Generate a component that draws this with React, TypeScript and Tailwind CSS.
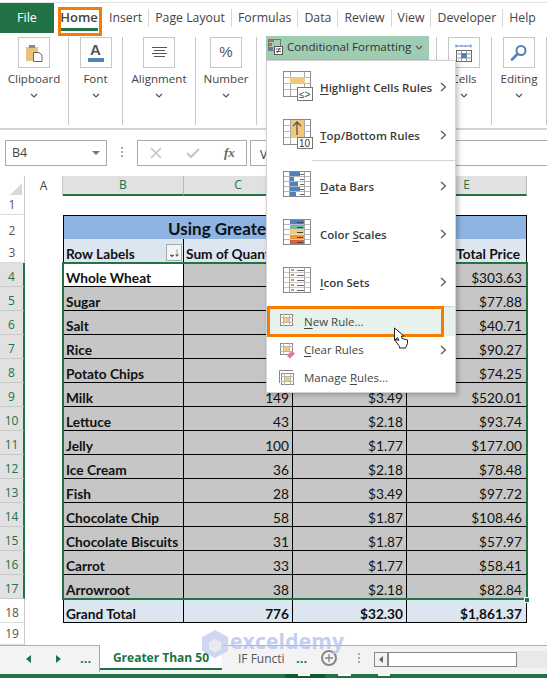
import React from "react";

const ui = "font-['Open_Sans',sans-serif]";
const cal = "font-['Lato',sans-serif]";

function Chev({ className = "" }: { className?: string }) {
  return (
    <svg width="8" height="5" viewBox="0 0 8 5" className={className}>
      <polyline points="1,1 4,4 7,1" fill="none" stroke="#555" strokeWidth="1.2" />
    </svg>
  );
}

function ChevR() {
  return (
    <svg width="7" height="10" viewBox="0 0 7 10">
      <polyline points="1,1 5.5,5 1,9" fill="none" stroke="#555" strokeWidth="1.2" />
    </svg>
  );
}

function Sep() {
  return <div className="w-px h-[88px] bg-[#c8c8c8] self-start mt-[4px] shrink-0" />;
}

function Group({ w, label, children }: { w: string; label: string; children: React.ReactNode }) {
  return (
    <div className={`${w} shrink-0 flex flex-col items-center pt-[4px]`}>
      <div className="w-[32px] h-[31px] border border-[#c6c6c6] bg-white flex items-center justify-center">{children}</div>
      <div className={`${ui} text-[11.6px] leading-[16px] mt-[3px] text-[#444] whitespace-nowrap`}>{label}</div>
      <Chev className="mt-[6px]" />
    </div>
  );
}

function Grid28({ children, over }: { children?: React.ReactNode; over?: React.ReactNode }) {
  const v = [7, 21];
  const h = [6.5, 12.5, 18.5];
  return (
    <svg width="31" height="30" viewBox="0 0 31 30" className="shrink-0">
      <rect x="0.5" y="0.5" width="27" height="25" fill="#fff" stroke="#8a8a8a" />
      {children}
      {v.map((p) => (
        <line key={p} x1={p + 0.5} y1="0" x2={p + 0.5} y2="26" stroke="#a8a8a8" />
      ))}
      {h.map((p) => (
        <line key={p} x1="0" y1={p} x2="28" y2={p} stroke="#b8b8b8" />
      ))}
      <rect x="0.5" y="0.5" width="27" height="25" fill="none" stroke="#8a8a8a" />
      {over}
    </svg>
  );
}

function IcoHighlight() {
  return (
    <Grid28
      over={
        <>
          <rect x="7" y="6" width="15" height="7" fill="#f0c97d" />
          <rect x="14.5" y="16.5" width="15" height="13" fill="#fff" stroke="#777" />
          <text x="16" y="27" fontSize="10" fill="#444" fontFamily="Liberation Sans">≤&gt;</text>
        </>
      }
    />
  );
}

function IcoTop() {
  return (
    <Grid28
      over={
        <>
          <rect x="8" y="1" width="13" height="18" fill="#f0c97d" />
          <path d="M14 16V3M10 7l4-4 4 4" fill="none" stroke="#555" strokeWidth="1.3" />
          <rect x="14.5" y="18.5" width="15" height="11" fill="#fff" stroke="#777" />
          <text x="16" y="28" fontSize="10" fill="#333" fontFamily="Liberation Sans">10</text>
        </>
      }
    />
  );
}

function IcoBars() {
  const w = [10, 4, 8, 10, 6];
  return (
    <svg width="31" height="30" viewBox="0 0 31 30" className="shrink-0">
      <rect x="0.5" y="0.5" width="27" height="25" fill="#fff" stroke="#8a8a8a" />
      {w.map((b, i) => (
        <g key={i}>
          <rect x="7" y={1 + i * 5} width={b} height="4" fill="#4f81bd" />
          <rect x="17" y={3 + i * 5} width="4" height="1" fill="#666" />
          <line x1="0" y1={5.5 + i * 5} x2="28" y2={5.5 + i * 5} stroke="#b8b8b8" />
        </g>
      ))}
      <line x1="6.5" y1="0" x2="6.5" y2="26" stroke="#a8a8a8" />
      <line x1="21.5" y1="0" x2="21.5" y2="26" stroke="#a8a8a8" />
      <rect x="0.5" y="0.5" width="27" height="25" fill="none" stroke="#8a8a8a" />
    </svg>
  );
}

function IcoScales() {
  const c = ["#4f81bd", "#7fb59c", "#f0c97d", "#ec9440", "#d9603b"];
  return (
    <svg width="31" height="30" viewBox="0 0 31 30" className="shrink-0">
      <rect x="0.5" y="0.5" width="27" height="25" fill="#fff" stroke="#8a8a8a" />
      {c.map((b, i) => (
        <g key={i}>
          <rect x="7" y={1 + i * 5} width="14" height="4.5" fill={b} />
          <rect x="14" y={3 + i * 5} width="6" height="1" fill="#444" />
          <line x1="0" y1={5.5 + i * 5} x2="7" y2={5.5 + i * 5} stroke="#b8b8b8" />
          <line x1="21" y1={5.5 + i * 5} x2="28" y2={5.5 + i * 5} stroke="#b8b8b8" />
        </g>
      ))}
      <line x1="21.5" y1="0" x2="21.5" y2="26" stroke="#a8a8a8" />
      <rect x="0.5" y="0.5" width="27" height="25" fill="none" stroke="#8a8a8a" />
    </svg>
  );
}

function IcoSets() {
  const c = ["#7fb59c", "#ec8a3a", "#7fb59c", "#ec8a3a", "#7fb59c"];
  return (
    <svg width="31" height="30" viewBox="0 0 31 30" className="shrink-0">
      <rect x="0.5" y="0.5" width="27" height="25" fill="#fff" stroke="#8a8a8a" />
      {c.map((b, i) => (
        <g key={i}>
          <rect x="8" y={2 + i * 5} width="3" height="2" fill={b} />
          <rect x="14" y={3 + i * 5} width="7" height="1" fill="#666" />
          <line x1="0" y1={5.5 + i * 5} x2="28" y2={5.5 + i * 5} stroke="#c8c8c8" />
        </g>
      ))}
      <line x1="6.5" y1="0" x2="6.5" y2="26" stroke="#a8a8a8" />
      <line x1="21.5" y1="0" x2="21.5" y2="26" stroke="#a8a8a8" />
      <rect x="0.5" y="0.5" width="27" height="25" fill="none" stroke="#8a8a8a" />
    </svg>
  );
}

function SmallGrid({ eraser, stack }: { eraser?: boolean; stack?: boolean }) {
  const dx = stack ? 2 : 1;
  const dy = stack ? 3 : 1;
  return (
    <svg width="17" height="17" viewBox="0 0 17 17" className="shrink-0">
      {stack && <path d="M0.5 13V0.5H14" fill="none" stroke="#888" />}
      <rect x={dx + 0.5} y={dy + 0.5} width="12" height="11" fill="#fff" stroke="#8a8a8a" />
      <path d={`M${dx + 3.5} ${dy}V${dy + 12}M${dx + 9.5} ${dy}V${dy + 12}M${dx} ${dy + 3.5}H${dx + 13}M${dx} ${dy + 8.5}H${dx + 13}`} stroke="#b8b8b8" />
      <rect x={dx + 4} y={dy + 4} width="5" height="4" fill="#f0c97d" />
      {eraser && <path d="M8 14l5-5 3 2.5-5 5z" fill="#e8788a" />}
    </svg>
  );
}

function MenuBig({ icon, children, shift }: { icon: React.ReactNode; children: React.ReactNode; shift?: boolean }) {
  return (
    <div className="h-[48px] flex items-center pl-[16px] pr-[8px] shrink-0">
      <div className={shift ? "-mt-[2px]" : ""}>{icon}</div>
      <div className={`${ui} ml-[6px] text-[11.5px] font-semibold text-[#3c3c3c] flex-1 whitespace-nowrap mt-[1px]`}>{children}</div>
      <ChevR />
    </div>
  );
}

function MenuSmall({ icon, children, hi, arrow, h }: { icon: React.ReactNode; children: React.ReactNode; hi?: boolean; arrow?: boolean; h: string }) {
  return (
    <div className={`${h} flex items-center pl-[12px] pr-[8px] shrink-0 ${hi ? "bg-[#e8f2ec]" : ""}`}>
      {icon}
      <div className={`${ui} ml-[8px] text-[11.5px] text-[#444] flex-1 whitespace-nowrap`}>{children}</div>
      {arrow && <ChevR />}
    </div>
  );
}

const U = ({ children }: { children: React.ReactNode }) => <span className="underline underline-offset-2">{children}</span>;

function Menu() {
  return (
    <div className="absolute left-[266px] top-[60px] w-[190px] h-[333px] bg-white border border-[#d4d4d4] shadow-[2px_2px_5px_rgba(0,0,0,0.25)] flex flex-col pt-[2px] z-20">
      <MenuBig icon={<IcoHighlight />} shift><U>H</U>ighlight Cells Rules</MenuBig>
      <MenuBig icon={<IcoTop />} shift><U>T</U>op/Bottom Rules</MenuBig>
      <div className="ml-[45px] h-px bg-[#d4d4d4] my-[1px] shrink-0" />
      <MenuBig icon={<IcoBars />}><U>D</U>ata Bars</MenuBig>
      <MenuBig icon={<IcoScales />}>Color <U>S</U>cales</MenuBig>
      <MenuBig icon={<IcoSets />}><U>I</U>con Sets</MenuBig>
      <div className="ml-[2px] h-px bg-[#d4d4d4] shrink-0" />
      <MenuSmall h="h-[29px]" icon={<SmallGrid />} hi><U>N</U>ew Rule...</MenuSmall>
      <MenuSmall h="h-[28px]" icon={<SmallGrid eraser />} arrow><U>C</U>lear Rules</MenuSmall>
      <MenuSmall h="h-[28px]" icon={<SmallGrid stack />}>Manage <U>R</U>ules...</MenuSmall>
      <div className="absolute left-[0px] top-[245px] w-[177px] h-[31px] border-[3px] border-[#f57c00]" />
    </div>
  );
}

function Cursor() {
  return (
    <svg width="16" height="22" viewBox="0 0 16 22" className="absolute left-[393px] top-[327px] z-30">
      <path d="M1.5 1V13.5L4.5 10.5L5.8 13.5L3 12.5L2.5 14L6.5 19.5V21H12.5L14.5 16.5V13L11 12L9 11.5L8.5 9L11 9Z" fill="#fff" stroke="#222" strokeWidth="1" strokeLinejoin="round" />
    </svg>
  );
}

const TAB = `${ui} text-[12.3px] text-[#444] px-[6px] whitespace-nowrap`;

function TabBar() {
  const items = ["Insert", "Page Layout", "Formulas", "Data", "Review", "View", "Developer", "Help"];
  return (
    <div className="h-[31px] mt-[2px] border-t border-[#e2e2e2] flex items-stretch bg-white relative shrink-0">
      <div className={`${ui} w-[54px] bg-[#217346] text-white text-[12.5px] flex items-center justify-center shrink-0`}>File</div>
      <div className="relative w-[50px] shrink-0 flex items-center justify-center">
        <span className={`${ui} text-[13px] text-[#444] font-semibold`}>Home</span>
        <div className="absolute left-[6px] top-[25px] w-[38px] h-[3px] bg-[#217346]" />
        <div className="absolute left-[4px] top-[4px] w-[44px] h-[29px] border-[3px] border-[#f57c00]" />
      </div>
      <div className="flex items-center -ml-[1px]">
        {items.map((t, i) => (
          <React.Fragment key={t}>
            {i > 0 && <div className="w-px h-[18px] bg-[#d6d6d6] shrink-0" />}
            <div className={TAB}>{t}</div>
          </React.Fragment>
        ))}
      </div>
    </div>
  );
}

function Ribbon() {
  return (
    <div className="h-[97px] border-b-2 border-[#d4d4d4] flex bg-white shrink-0 overflow-hidden">
      <Group w="w-[68px]" label="Clipboard">
        <svg width="18" height="18" viewBox="0 0 18 18">
          <rect x="1" y="3" width="12" height="14" fill="#e8c17f" />
          <rect x="4" y="1" width="6" height="3" fill="#888" />
          <path d="M8.5 8.5H14L17 11V17.5H8.5Z" fill="#fff" stroke="#666" />
        </svg>
      </Group>
      <Sep />
      <Group w="w-[53px]" label="Font">
        <div className="flex flex-col items-center">
          <span className="font-['Liberation_Sans',sans-serif] font-bold text-[15px] leading-[14px] text-[#555]">A</span>
          <div className="w-[16px] h-[4px] bg-[#4f81bd] mt-[1px]" />
        </div>
      </Group>
      <Sep />
      <Group w="w-[72px]" label="Alignment">
        <svg width="15" height="12" viewBox="0 0 15 12">
          <path d="M0 .5H15M2 3.5H13M0 6.5H15M2 9.5H13" stroke="#555" />
        </svg>
      </Group>
      <Sep />
      <Group w="w-[60px]" label="Number">
        <span className="font-['Liberation_Sans',sans-serif] text-[15px] text-[#555]">%</span>
      </Group>
      <Sep />
      <div className="w-[179px] shrink-0 pt-[3px] pl-[9px]">
        <div className={`${ui} w-[163px] h-[24px] pb-[2px] bg-[#9fcdb3] flex items-center pl-[2px] text-[11.6px] text-[#333]`}>
          <svg width="15" height="16" viewBox="0 0 15 16" className="shrink-0 mr-[4px]">
            <rect x="0" y="0" width="6" height="3" fill="#d9603b" />
            <rect x="0" y="4" width="4" height="3" fill="#d9603b" />
            <rect x="0" y="8" width="5" height="3" fill="#4f81bd" />
            <rect x="0.5" y="0.5" width="12" height="11" fill="none" stroke="#777" />
            <rect x="6.5" y="7.5" width="8" height="8" fill="#fff" stroke="#555" />
            <path d="M8 10H13M8 12.5H13M9 14L12 9" stroke="#333" strokeWidth="0.8" />
          </svg>
          <span className="whitespace-nowrap">Conditional Formatting</span>
          <Chev className="ml-[4px]" />
        </div>
      </div>
      <Sep />
      <Group w="w-[54px]" label="Cells">
        <svg width="18" height="18" viewBox="0 0 18 18">
          <path d="M1 2H16M1 .5V3.5M16 .5V3.5M6 2H7M10 2H11" stroke="#4f81bd" />
          <rect x="1.5" y="6.5" width="15" height="11" fill="#fff" stroke="#666" />
          <path d="M6.5 6V18M11.5 6V18M1 10H17M1 14H17" stroke="#999" />
          <rect x="6" y="9" width="6" height="5" fill="#4f81bd" />
        </svg>
      </Group>
      <Sep />
      <Group w="w-[54px]" label="Editing">
        <svg width="18" height="18" viewBox="0 0 18 18">
          <circle cx="11" cy="6.5" r="4.5" fill="none" stroke="#4f81bd" strokeWidth="2" />
          <path d="M7.5 10L2 15.5" stroke="#4f81bd" strokeWidth="2.6" strokeLinecap="round" />
        </svg>
      </Group>
      <Sep />
    </div>
  );
}

function FormulaBar() {
  return (
    <div className="h-[46px] pt-[10px] pl-[5px] flex items-start bg-white shrink-0">
      <div className={`${ui} w-[102px] h-[26px] border border-[#ababab] flex items-center justify-between pl-[6px] pr-[6px] text-[12.5px] text-[#444]`}>
        B4
        <svg width="8" height="4" viewBox="0 0 8 4"><path d="M0 0H8L4 4Z" fill="#777" /></svg>
      </div>
      <div className="w-[30px] flex flex-col items-center gap-[2px] pt-[7px]">
        <div className="w-[2px] h-[2px] bg-[#aaa]" />
        <div className="w-[2px] h-[2px] bg-[#aaa]" />
        <div className="w-[2px] h-[2px] bg-[#aaa]" />
      </div>
      <div className="w-[110px] h-[26px] border border-[#ababab] flex items-center pl-[12px] shrink-0">
        <svg width="12" height="12" viewBox="0 0 12 12"><path d="M1 1L11 11M11 1L1 11" stroke="#c4c4c4" strokeWidth="1.6" /></svg>
        <svg width="14" height="12" viewBox="0 0 14 12" className="ml-[24px]"><path d="M1 6L5 10L13 2" fill="none" stroke="#c4c4c4" strokeWidth="2" /></svg>
        <span className="font-['Liberation_Serif',serif] italic font-bold text-[13px] text-[#666] ml-[24px]">fx</span>
      </div>
      <div className="flex-1 h-[26px] ml-[3px] border border-[#ababab] border-r-0 pl-[9px]">
        <span className={`${ui} text-[12px] text-[#333]`}>V</span>
      </div>
    </div>
  );
}

const COLS = "grid grid-cols-[25px_38px_121px_109px_114px_120px_20px]";

function ColHeader() {
  return (
    <div className={`${COLS} h-[19px] shrink-0 ${ui} text-[12px] text-[#217346]`}>
      <div className="relative bg-white border-r border-[#c8c8c8]">
        <svg width="12" height="12" viewBox="0 0 12 12" className="absolute right-[2px] bottom-[1px]"><path d="M12 0V12H0Z" fill="#d9d9d9" /></svg>
      </div>
      <div className="bg-white flex items-center justify-center text-[#444] border-r border-[#c8c8c8]">A</div>
      {["B", "C", "D", "E"].map((c) => (
        <div key={c} className="bg-[#e1e1e1] border-r border-[#b8b8b8] border-b-2 border-b-[#217346] flex items-center justify-center">{c}</div>
      ))}
      <div className="bg-white" />
    </div>
  );
}

function RowHead({ n, sel, low }: { n: number; sel?: boolean; low?: boolean }) {
  return (
    <div className={`${ui} text-[12px] flex items-center justify-center border-b ${low ? "pt-[5px]" : ""} ${sel ? "bg-[#e1e1e1] text-[#217346] border-r-2 border-r-[#217346] border-b-[#c8c8c8]" : "bg-white text-[#555] border-r border-r-[#c8c8c8] border-b-[#dcdcdc]"}`}>
      {n}
    </div>
  );
}

const data: [string, string, string, string][] = [
  ["Whole Wheat", "", "", "$303.63"],
  ["Sugar", "", "", "$77.88"],
  ["Salt", "", "", "$40.71"],
  ["Rice", "", "", "$90.27"],
  ["Potato Chips", "", "", "$74.25"],
  ["Milk", "149", "$3.49", "$520.01"],
  ["Lettuce", "43", "$2.18", "$93.74"],
  ["Jelly", "100", "$1.77", "$177.00"],
  ["Ice Cream", "36", "$2.18", "$78.48"],
  ["Fish", "28", "$3.49", "$97.72"],
  ["Chocolate Chip", "58", "$1.87", "$108.46"],
  ["Chocolate Biscuits", "31", "$1.87", "$57.97"],
  ["Carrot", "33", "$1.77", "$58.41"],
  ["Arrowroot", "38", "$2.18", "$82.84"],
];

const cell = `${cal} text-[13.7px] leading-[16px] text-[#111] flex items-end whitespace-nowrap overflow-hidden border-b border-r border-black`;

function Sheet() {
  return (
    <div className="relative flex flex-col shrink-0">
      <div className={`${COLS} h-[20px]`}>
        <RowHead n={1} />
      </div>
      <div className={`${COLS} h-[24px]`}>
        <RowHead n={2} low />
        <div />
        <div className={`col-span-4 bg-[#8db4e2] border border-black flex items-center pl-[104px] ${cal} font-bold text-[17px] text-[#111] whitespace-nowrap`}>Using Greater Than 50</div>
      </div>
      <div className={`${COLS} h-[24px]`}>
        <RowHead n={3} low />
        <div />
        <div className={`${cell} bg-[#dce6f1] font-bold pl-[2px] border-l justify-between relative`}>
          Row Labels
          <div className="absolute right-[1px] top-[5px] w-[16px] h-[17px] bg-[#f4f4f4] border border-[#aaa] flex items-center justify-center">
            <svg width="11" height="10" viewBox="0 0 11 10"><path d="M1 7H5L3 9ZM8 1V8M6.5 6.5L8 8.5L9.5 6.5" fill="#555" stroke="#555" strokeWidth="0.5" /></svg>
          </div>
        </div>
        <div className={`${cell} bg-[#dce6f1] font-bold pl-[2px]`}>Sum of Quantity</div>
        <div className={`${cell} bg-[#dce6f1] font-bold`} />
        <div className={`${cell} bg-[#dce6f1] font-bold justify-end pr-[6px]`}>Total Price</div>
      </div>
      {data.map((d, i) => (
        <div key={d[0]} className={`${COLS} h-[24px]`}>
          <RowHead n={i + 4} sel low />
          <div />
          <div className={`${cell} font-bold pl-[2px] border-l ${i === 0 ? "bg-white" : "bg-[#c6c6c6]"}`}>{d[0]}</div>
          <div className={`${cell} bg-[#c6c6c6] justify-end pr-[3px]`}>{d[1]}</div>
          <div className={`${cell} bg-[#c6c6c6] justify-end pr-[3px]`}>{d[2]}</div>
          <div className={`${cell} bg-[#c6c6c6] justify-end pr-[4px]`}>{d[3]}</div>
        </div>
      ))}
      <div className={`${COLS} h-[24px]`}>
        <RowHead n={18} low />
        <div />
        <div className={`${cell} bg-[#dce6f1] font-bold pl-[2px] border-l`}>Grand Total</div>
        <div className={`${cell} bg-[#dce6f1] font-bold justify-end pr-[3px]`}>776</div>
        <div className={`${cell} bg-[#dce6f1] font-bold justify-end pr-[3px]`}>$32.30</div>
        <div className={`${cell} bg-[#dce6f1] font-bold justify-end pr-[4px]`}>$1,861.37</div>
      </div>
      <div className={`${COLS} h-[22px]`}>
        <RowHead n={19} />
      </div>
      <div className="absolute left-[62px] top-[67px] w-[466px] h-[338px] border-2 border-[#217346] pointer-events-none" />
      <div className="absolute left-[524px] top-[402px] w-[6px] h-[6px] bg-[#217346] border border-white pointer-events-none" />
    </div>
  );
}

function SheetTabs() {
  return (
    <div className="relative h-[29px] bg-[#f3f3f3] flex items-start shrink-0 border-t border-[#b0b0b0]">
      <div className="w-[100px] h-[26px] border-r border-[#a8a8a8] flex items-center pl-[26px] text-[#217346] shrink-0">
        <svg width="6" height="8" viewBox="0 0 6 8"><path d="M5 0V8L0 4Z" fill="#217346" /></svg>
        <svg width="6" height="8" viewBox="0 0 6 8" className="ml-[23px]"><path d="M1 0V8L6 4Z" fill="#217346" /></svg>
        <span className={`${ui} font-bold text-[13px] ml-[19px] -mt-[1px]`}>...</span>
      </div>
      <div className={`${ui} w-[122px] h-[25px] -mt-px pt-[3px] bg-white border-b-2 border-[#217346] flex items-center justify-center text-[12px] font-bold text-[#217346] whitespace-nowrap shrink-0`}>Greater Than 50</div>
      <div className={`${ui} w-[62px] h-[25px] flex items-center pl-[16px] text-[12px] text-[#555] whitespace-nowrap overflow-hidden shrink-0`}>IF Functic</div>
      <div className="absolute left-[296px] top-[0px] h-[26px] flex items-center">
        <span className={`${ui} font-bold text-[13px] text-[#217346] -mt-[1px]`}>...</span>
      </div>
      <div className="absolute left-[321px] top-[4px] w-[16px] h-[16px] rounded-full border-2 border-[#888] flex items-center justify-center bg-[#f3f3f3]">
        <svg width="8" height="8" viewBox="0 0 8 8"><path d="M4 0V8M0 4H8" stroke="#888" strokeWidth="1.4" /></svg>
      </div>
      <div className="absolute left-[358px] top-[7px] flex flex-col gap-[2px]">
        <div className="w-[2px] h-[2px] bg-[#aaa]" />
        <div className="w-[2px] h-[2px] bg-[#aaa]" />
        <div className="w-[2px] h-[2px] bg-[#aaa]" />
      </div>
      <div className="absolute left-[374px] top-[6px] w-[143px] h-[15px] border border-[#888] bg-white flex items-center">
        <div className="w-[14px] h-full border-r-2 border-[#888] bg-[#f3f3f3] flex items-center justify-center">
          <svg width="5" height="7" viewBox="0 0 5 7"><path d="M4 0V7L0 3.5Z" fill="#666" /></svg>
        </div>
      </div>
      <div className="absolute left-[517px] top-[5px] w-[30px] h-[17px] bg-[#e9e9e9]" />
    </div>
  );
}

function Watermark() {
  return (
    <div className="absolute left-[201px] top-[628px] flex items-start z-10 pointer-events-none opacity-80">
      <svg width="28" height="32" viewBox="0 0 28 30">
        <path d="M14 1L27 8V22L14 29L1 22V8Z" fill="#c2cdf0" />
        <path d="M14 10L20 13.5V20L14 23.5L8 20V13.5Z" fill="#e6e6ee" />
      </svg>
      <div className="relative ml-[1px]">
        <div className={`${ui} font-bold text-[21px] leading-[26px] text-[#b4c4f0] tracking-[0.2px]`}>exceldemy</div>
      </div>
    </div>
  );
}

export default function App() {
  return (
    <div className="relative w-[547px] h-[678px] overflow-hidden bg-white flex flex-col">
      <TabBar />
      <Ribbon />
      <FormulaBar />
      <ColHeader />
      <Sheet />
      <SheetTabs />
      <div className="relative h-[4px] bg-[#217346] shrink-0 flex">
        <div className="ml-[285px] w-[40px] h-full bg-[#0f5c33]" />
        <div className="absolute left-[298px] top-0 w-[12px] h-[2px] bg-white" />
        <div className="absolute left-[338px] top-0 w-[13px] h-[2px] bg-white" />
        <div className="absolute left-[378px] top-0 w-[12px] h-[2px] bg-white" />
      </div>
      <Menu />
      <Cursor />
      <Watermark />
    </div>
  );
}
